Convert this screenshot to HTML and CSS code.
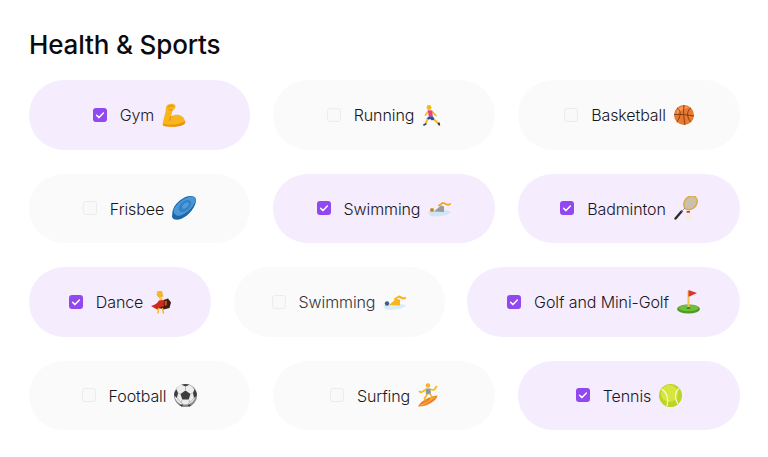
FILE: index.html
```html
<!DOCTYPE html>
<html>
    <head>
        <meta charset="utf-8">
        <title>Health &amp; Sports</title>
        <link rel="stylesheet" href="styles.css">
    </head>
    <body>
        <div class="wrapper">
            <h1 class="title">Health &amp; Sports</h1>

            <div class="row">
                <div class="pill on">
                    <span class="check"><svg viewBox="0 0 14 14"><path d="M3.600 7.300l2.400 2.300 4.400-4.600"/></svg></span>
                    <span class="label">Gym</span>
                    <svg class="emoji" width="24" height="24" viewBox="0 0 24 24">
                        <path fill="#f8b51e" d="M4.500 3C6.500 .2 12 -.2 13.300 2.300 14.200 5 12.200 6.800 10.600 7.300L9 13.300C12 11.300 16.500 11 19.500 13 22.500 15 23.500 18 23 20.300 20 24 10 24.200 3.200 23.300 1 23 .3 21.500 .8 19.500L3.800 7.500C3.800 5.800 4 4 4.500 3Z"/>
                        <path fill="#e8930c" d="M23 20.300C20 24 10 24.200 3.200 23.300 1.600 23 .7 22.200 .6 21 7 22.500 17 22.300 23.200 18Z"/>
                        <path fill="none" stroke="#c9820e" stroke-width=".8" d="M6 4c1.500-1.200 4-1.500 5.500-.5M7 6.500L10.600 7.300M9 13.300c-.8 1.400-1.200 2.700-1.300 4.500"/>
                    </svg>
                </div>
                <div class="pill">
                    <span class="check"></span>
                    <span class="label">Running</span>
                    <svg class="emoji" width="19" height="24" viewBox="0 0 19 24">
                        <circle cx="7" cy="4.500" r="2.400" fill="#f8b51e"/>
                        <path fill="none" stroke="#f8b51e" stroke-width="1.700" stroke-linecap="round" d="M6.500 8L3.500 12M10 8.500L14 12.500"/>
                        <path fill="#e5457a" d="M5.800 7.300L10.200 7.500 10.800 13.800 6.800 13.800Z"/>
                        <path fill="#27509f" d="M6.800 13.500L11 13.500 13 17 9.500 17.200 8.300 16 5.500 17 4.500 15.500Z"/>
                        <path fill="none" stroke="#f8b51e" stroke-width="1.700" stroke-linecap="round" d="M5.500 16.500L3.500 20.500M12.500 17L16 20"/>
                        <path fill="#333c4a" d="M1 21.500l3-1.500.8 1.300-3 1.700ZM15.400 20l2.400-.4.4 2.800-1.600.2Z"/>
                    </svg>
                </div>
                <div class="pill">
                    <span class="check"></span>
                    <span class="label">Basketball</span>
                    <svg class="emoji" width="20" height="20" viewBox="0 0 20 20">
                        <circle cx="10" cy="10" r="10" fill="#ea7a30"/>
                        <path fill="#f59a5c" d="M4 4C7 1 12 .8 15 2.500 12 3 6 5 3 9.500 2.500 8 3 5.500 4 4Z"/>
                        <path fill="none" stroke="#6b3010" stroke-width=".8" d="M10 0C9 7 10 14 11 20M0 9.500C7 9 14 10 20 11M3 2.800C6 5 7 8 5.500 12 4.500 14.500 3.500 16 3 17.200M17 2.800C14 5 13 8 14 12 14.700 14.500 16 16 17 17.200"/>
                    </svg>
                </div>
            </div>

            <div class="row">
                <div class="pill">
                    <span class="check"></span>
                    <span class="label">Frisbee</span>
                    <svg class="emoji" width="24" height="24" viewBox="0 0 24 24">
                        <path fill="#1d66aa" d="M.5 15C2 9 9 2 16 .3 20 -.5 24 .5 24 4 24 10 18 19 9 23 5 24.500 .3 24 0 20.500Z"/>
                        <path fill="#4a97d6" d="M1.500 14C3.500 9 10 3 16.500 1 20 0 23.500 .8 23.500 3.500 23.300 8.500 17.500 15.500 10 19 5.500 21 1.500 19 1.500 14Z"/>
                        <ellipse cx="13" cy="10" rx="7.500" ry="4.500" transform="rotate(-42 13 10)" fill="#3380c4"/>
                        <ellipse cx="13.500" cy="9.500" rx="4" ry="2.200" transform="rotate(-42 13.500 9.500)" fill="#4f9cdb"/>
                    </svg>
                </div>
                <div class="pill on">
                    <span class="check"><svg viewBox="0 0 14 14"><path d="M3.600 7.300l2.400 2.300 4.400-4.600"/></svg></span>
                    <span class="label">Swimming</span>
                    <svg class="emoji" width="23" height="24" viewBox="0 0 23 24">
                        <path fill="#cfe6f5" d="M0 16C5 13 18 13 23 16 20 20 6 21.500 2 19.500Z"/>
                        <path fill="#9a9a9a" d="M6 15.500L13 9.500 16 10.500 16 16Z"/>
                        <path fill="none" stroke="#f2a51f" stroke-width="1.800" stroke-linecap="round" stroke-linejoin="round" d="M11 9.500L15 6.800 20 9 22 8"/>
                        <circle cx="4" cy="14" r="2" fill="#c98a1c"/>
                    </svg>
                </div>
                <div class="pill on">
                    <span class="check"><svg viewBox="0 0 14 14"><path d="M3.600 7.300l2.400 2.300 4.400-4.600"/></svg></span>
                    <span class="label">Badminton</span>
                    <svg class="emoji" width="24" height="24" viewBox="0 0 24 24">
                        <ellipse cx="16.500" cy="6.800" rx="6" ry="7.600" transform="rotate(42 16.500 6.800)" fill="#cdbfae" stroke="#d8ab3e" stroke-width="1.400"/>
                        <path stroke="#2d2d2d" stroke-width="2.400" stroke-linecap="round" d="M1.500 22.500L7.500 15.500"/>
                        <path stroke="#8c8c8c" stroke-width="1" d="M7.500 15.500L11 12"/>
                        <path fill="#f3efdc" d="M10.500 24L18 24 15.500 17.500 13 17.500Z"/>
                        <rect x="12.600" y="15" width="3.300" height="1.700" fill="#d0392b"/>
                    </svg>
                </div>
            </div>

            <div class="row row-wide">
                <div class="pill on">
                    <span class="check"><svg viewBox="0 0 14 14"><path d="M3.600 7.300l2.400 2.300 4.400-4.600"/></svg></span>
                    <span class="label">Dance</span>
                    <svg class="emoji" width="20" height="24" viewBox="0 0 20 24">
                        <path fill="#f2b632" d="M6.500 1L11 1 12.500 6.500 8 8 5.500 5Z"/>
                        <path fill="#f8c54a" d="M8.500 7.500L11 7.500 11.500 11.500 8.500 11.500Z"/>
                        <path fill="#d3261f" d="M8 10.500L12.500 10 13.500 16.500 6 19.500 0 16C3 15 6 14 8 10.500Z"/>
                        <path fill="#3c1d12" d="M12.500 10L17 8.500 20 12.500 18.500 18 12.500 19.500 8 18 13 16Z"/>
                        <path fill="#c9541c" d="M13.500 11.500L16 10.500 15.800 15 13.800 16Z"/>
                        <path fill="none" stroke="#f2b632" stroke-width="1.500" stroke-linecap="round" d="M7.500 18.500L7 23M11.500 18.500L12.500 23"/>
                    </svg>
                </div>
                <div class="pill faded">
                    <span class="check"></span>
                    <span class="label">Swimming</span>
                    <svg class="emoji" width="23" height="24" viewBox="0 0 23 24">
                        <path fill="#d6ecf8" d="M0 15.500C5 13 18 13 23 15.500 20 19.500 6 21 2 19Z"/>
                        <path fill="#f8b51e" d="M6 15L13 9 17 9.500 17 15.500Z"/>
                        <path fill="none" stroke="#f8b51e" stroke-width="2" stroke-linecap="round" stroke-linejoin="round" d="M12 9L16 6.500 20 8.500 22.500 8"/>
                        <circle cx="4" cy="13.500" r="2.200" fill="#39618f"/>
                    </svg>
                </div>
                <div class="pill on">
                    <span class="check"><svg viewBox="0 0 14 14"><path d="M3.600 7.300l2.400 2.300 4.400-4.600"/></svg></span>
                    <span class="label">Golf and Mini-Golf</span>
                    <svg class="emoji" width="23" height="24" viewBox="0 0 23 24">
                        <ellipse cx="11.500" cy="19" rx="11.500" ry="4.500" fill="#4f9a26"/>
                        <ellipse cx="11.500" cy="18" rx="10" ry="3.200" fill="#6fbf3a"/>
                        <rect x="10.500" y="1" width="2" height="17" fill="#f0c24e"/>
                        <path fill="#e0352b" d="M11.500 0L20 3 12.500 6.500 11.500 6.500Z"/>
                        <ellipse cx="11.500" cy="18" rx="2" ry=".8" fill="#2d5c16"/>
                    </svg>
                </div>
            </div>

            <div class="row">
                <div class="pill">
                    <span class="check"></span>
                    <span class="label">Football</span>
                    <svg class="emoji" width="23" height="23" viewBox="0 0 23 23">
                        <circle cx="11.500" cy="11.500" r="11.500" fill="#8d8d8d"/>
                        <circle cx="11" cy="10.500" r="10.500" fill="#ededed"/>
                        <path fill="#3d3d3d" d="M11.500 6.500L16.500 10 14.700 15.500 8.300 15.500 6.500 10ZM7.500 .700L11.500 2.500 15.500 .700C13 -.2 10 -.2 7.500 .700ZM.100 11.500L3 14 4 9 2.500 5.300C.800 7 .100 9.300 .100 11.500ZM22.900 11.500L20 14 19 9 20.500 5.300C22.200 7 22.900 9.300 22.900 11.500ZM5.500 21L9.500 20.500 8 22.700C7 22.400 6.200 21.700 5.500 21ZM17.500 21L13.500 20.500 15 22.700C16 22.400 16.800 21.700 17.500 21Z"/>
                        <path fill="none" stroke="#9a9a9a" stroke-width=".6" d="M11.500 2.500V6.500M16.500 10L19 9M6.500 10L4 9M8.300 15.500L7 18.500 3 14M14.700 15.500L16 18.500 20 14M7 18.500L9.500 20.500 13.500 20.500 16 18.500"/>
                    </svg>
                </div>
                <div class="pill">
                    <span class="check"></span>
                    <span class="label">Surfing</span>
                    <svg class="emoji" width="20" height="24" viewBox="0 0 20 24">
                        <path fill="#ef7f22" d="M0 23.500C2 18.500 11 13.500 19.500 12.500 19 17.500 9 24 0 23.500Z"/>
                        <path fill="none" stroke="#f9c77a" stroke-width=".8" d="M2.500 22.500C7 20.500 12 18 17 14"/>
                        <circle cx="10" cy="2.500" r="2.300" fill="#f8b51e"/>
                        <path fill="#8d97a0" d="M7.500 5.500L12.500 5.500 13 11 8 11.500Z"/>
                        <path fill="none" stroke="#f8b51e" stroke-width="1.700" stroke-linecap="round" stroke-linejoin="round" d="M8 6.500L3 9.500 1.500 8.500M12.500 6.500L16 7 18.500 3.500M9 11.500L6.500 15.500 7 17M12 11L14 13.500 13 16"/>
                    </svg>
                </div>
                <div class="pill on">
                    <span class="check"><svg viewBox="0 0 14 14"><path d="M3.600 7.300l2.400 2.300 4.400-4.600"/></svg></span>
                    <span class="label">Tennis</span>
                    <svg class="emoji" width="23" height="23" viewBox="0 0 23 23">
                        <circle cx="11.500" cy="11.500" r="11.500" fill="#bcd424"/>
                        <circle cx="10.500" cy="9.500" r="8.500" fill="#d6e63e"/>
                        <path fill="none" stroke="#f4f6d8" stroke-width="1.200" d="M2.500 5C8 8 10 15 8 22.500M20.500 4C16 7 15 14 19 20"/>
                    </svg>
                </div>
            </div>
        </div>
    </body>
</html>
```

FILE: styles.css
```css
body { margin: 0; background: #fff; }

.wrapper {
    width: 711px;
    padding: 29px 0 0 29px;
    font-family: Inter, "Liberation Sans", sans-serif;
    color: #17171c;
}

.title {
    margin: 0 0 20px;
    font-size: 26px;
    line-height: 31px;
    font-weight: 500;
    letter-spacing: -0.15px;
    color: #0b0b0f;
}

.row {
    display: grid;
    grid-template-columns: 221px 222px 222px;
    column-gap: 23px;
    margin-bottom: 24px;
}

.row-wide {
    grid-template-columns: 182px 211px 273px;
    column-gap: 22.5px;
}

.pill {
    display: flex;
    align-items: center;
    justify-content: center;
    height: 69.5px;
    border-radius: 35px;
    background: #fafafa;
}

.pill.on { background: #f5ecfe; }

.check {
    display: flex;
    box-sizing: border-box;
    width: 14px;
    height: 14px;
    margin-right: 13px;
    border: 1.5px solid #ececec;
    border-radius: 3px;
    background: #f9f9f9;
}

.on .check {
    border: 0;
    background: #9148f0;
}

.check svg { width: 14px; height: 14px; }

.check path {
    fill: none;
    stroke: #fff;
    stroke-width: 1.500;
    stroke-linecap: round;
    stroke-linejoin: round;
}

.label {
    padding-top: 1px;
    font-size: 16px;
    font-weight: 350;
    line-height: 20px;
    letter-spacing: -0.1px;
}

.faded .label { color: #33333a; }

.emoji {
    flex: none;
    margin-left: 8px;
}
```
